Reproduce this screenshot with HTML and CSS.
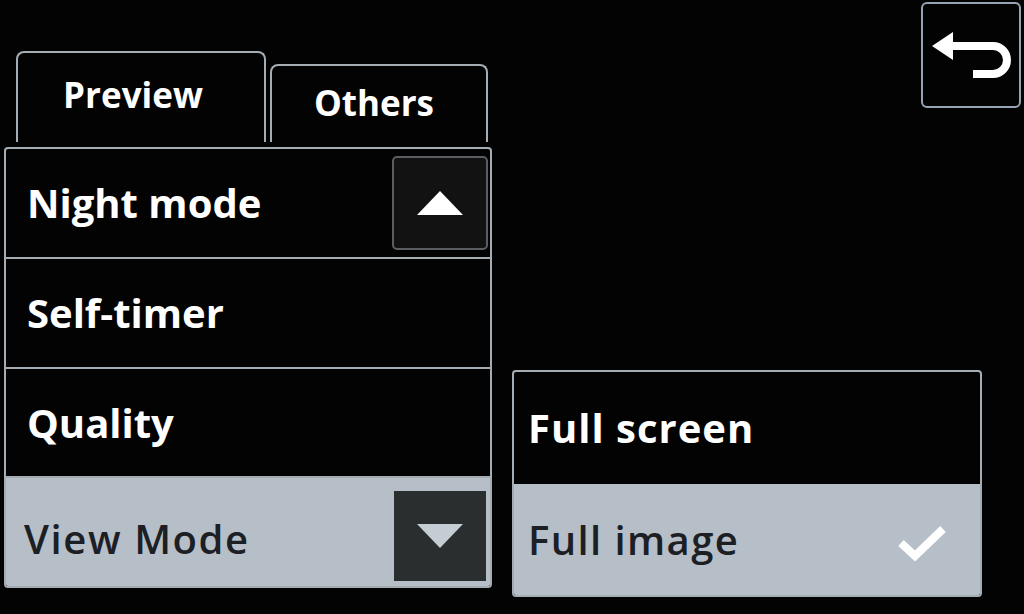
FILE: index.html
```html
<!DOCTYPE html>
<html lang="en">
<head>
    <meta charset="UTF-8">
    <title>View Mode</title>
    <link rel="stylesheet" href="styles.css">
</head>
<body>
    <div class="screen">
        <div class="left">
            <div class="tabs">
                <div class="tab active">Preview</div>
                <div class="tab">Others</div>
            </div>
            <div class="menu">
                <div class="row">
                    <span>Night mode</span>
                    <div class="arrow-btn up">
                        <svg width="48" height="26" viewBox="0 0 48 26"><polygon points="24,1 47,25 1,25" fill="#fff"/></svg>
                    </div>
                </div>
                <div class="row"><span>Self-timer</span></div>
                <div class="row"><span>Quality</span></div>
                <div class="row selected">
                    <span class="label">View Mode</span>
                    <div class="arrow-btn down">
                        <svg width="48" height="26" viewBox="0 0 48 26"><polygon points="1,1 47,1 24,25" fill="#c4ccd4"/></svg>
                    </div>
                </div>
            </div>
        </div>
        <div class="right">
            <div class="back-btn">
                <svg width="96" height="102" viewBox="0 0 96 102">
                    <polygon points="9,42 30,28 30,56" fill="#fff"/>
                    <path d="M27 42 H70 A14 14 0 0 1 70 70 H50" fill="none" stroke="#fff" stroke-width="8"/>
                </svg>
            </div>
            <div class="submenu">
                <div class="row"><span>Full screen</span></div>
                <div class="row selected">
                    <span>Full image</span>
                    <svg class="check" width="52" height="40" viewBox="0 0 52 40"><path d="M5 20 L19 33 L47 6" fill="none" stroke="#fff" stroke-width="8"/></svg>
                </div>
            </div>
        </div>
    </div>
</body>
</html>
```
FILE: styles.css
```css
body {
    margin: 0;
    background: #030303;
    font-family: "Open Sans", "DejaVu Sans", sans-serif;
    color: #fff;
}
.screen {
    display: flex;
    width: 1024px;
    height: 614px;
    overflow: hidden;
}
.left {
    width: 488px;
    margin-left: 4px;
    display: flex;
    flex-direction: column;
}
.tabs {
    display: flex;
    align-items: flex-end;
    padding-top: 51px;
    padding-left: 12px;
    gap: 4px;
    height: 142px;
    box-sizing: border-box;
}
.tab {
    box-sizing: border-box;
    border: 2px solid #a4acb4;
    border-bottom: none;
    border-radius: 8px 8px 0 0;
    display: flex;
    justify-content: center;
    align-items: center;
    font-size: 35px;
    font-weight: 700;
    width: 218px;
    height: 78px;
    padding-bottom: 4px;
    padding-right: 10px;
}
.tab.active {
    width: 250px;
    height: 91px;
    padding-bottom: 6px;
    padding-right: 16px;
}
.menu {
    margin-top: 5px;
    border: 2px solid #a4acb4;
    border-radius: 4px;
    height: 441px;
    box-sizing: border-box;
    display: flex;
    flex-direction: column;
    overflow: hidden;
}
.row {
    flex: 1;
    display: flex;
    align-items: center;
    justify-content: space-between;
    padding-left: 21px;
    font-size: 40px;
    font-weight: 700;
    border-top: 2px solid #a4acb4;
}
.row:first-child {
    border-top: none;
}
.row.selected {
    background: #b6bec8;
    color: #1c2024;
    font-weight: 600;
    letter-spacing: 1.6px;
}
.label {
    margin-top: 12px;
    margin-left: -3px;
}
.arrow-btn {
    width: 96px;
    height: 94px;
    margin-right: 2px;
    display: flex;
    align-items: center;
    justify-content: center;
    box-sizing: border-box;
}
.arrow-btn.up {
    background: #121212;
    border: 2px solid #5a5e62;
    border-radius: 5px;
}
.arrow-btn.down {
    background: #2a2e2e;
    height: 90px;
    width: 92px;
    margin-right: 4px;
    margin-top: 8px;
}
.right {
    flex: 1;
    display: flex;
    flex-direction: column;
    padding-left: 20px;
}
.back-btn {
    align-self: flex-end;
    margin-top: 2px;
    margin-right: 3px;
    width: 100px;
    height: 106px;
    box-sizing: border-box;
    border: 2px solid #98a4b4;
    border-radius: 6px;
}
.submenu {
    margin-top: 262px;
    width: 470px;
    height: 227px;
    box-sizing: border-box;
    border: 2px solid #a4acb4;
    border-radius: 4px;
    display: flex;
    flex-direction: column;
    overflow: hidden;
}
.submenu .row {
    padding-left: 14px;
    border-top: none;
    letter-spacing: 1px;
}
.submenu .row.selected {
    letter-spacing: 1.4px;
}
.check {
    margin-right: 32px;
    margin-top: 8px;
}
```
